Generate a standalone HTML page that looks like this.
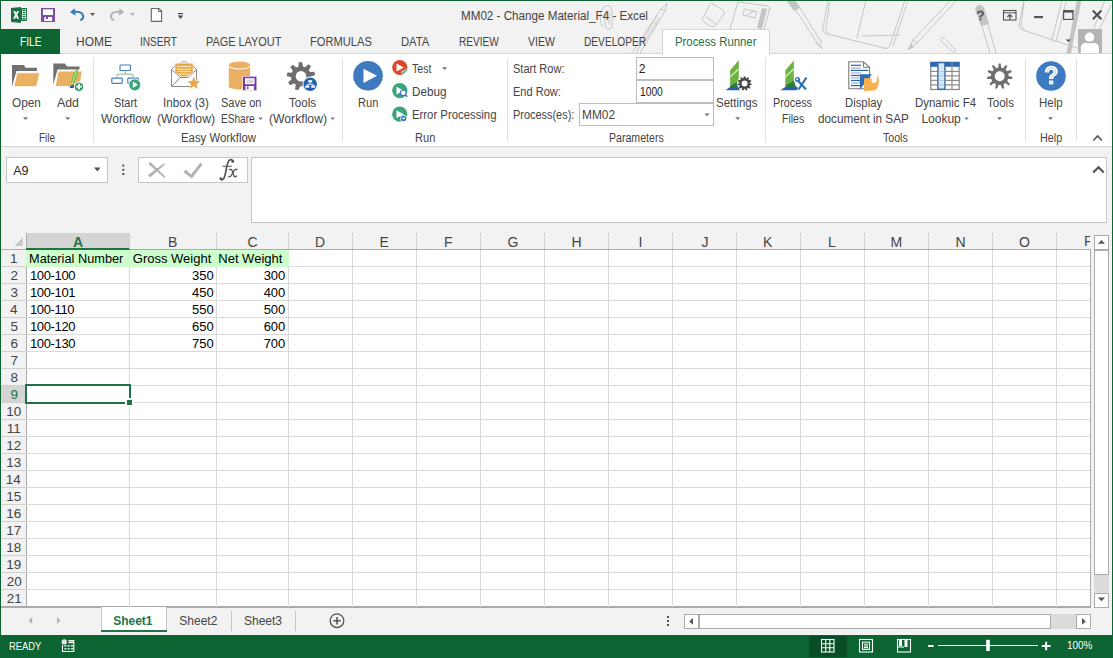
<!DOCTYPE html>
<html><head><meta charset="utf-8">
<style>
*{box-sizing:border-box;margin:0;padding:0}
html,body{width:1113px;height:658px;overflow:hidden;background:#f2f2f2;font-family:"Liberation Sans",sans-serif;color:#444;position:relative}
.a{position:absolute}
.t{position:absolute;white-space:nowrap;line-height:1}
.hl{position:absolute;left:26px;width:1064px;height:1px;background:#dadada}
.vl{position:absolute;top:250px;height:357px;width:1px;background:#dadada}
.cs{position:absolute;top:233px;height:16px;width:1px;background:#d0d0d0}
svg{position:absolute;left:0;top:0}
</style></head><body>
<!-- title + tabs background -->
<div class="a" style="left:0;top:0;width:1113px;height:54px;background:#f2f2f2"></div>
<div class="a" style="left:1px;top:1px;width:1111px;height:1px;background:#fafafa"></div>
<div class="a" style="left:1px;top:1px;width:1px;height:28px;background:#fafafa"></div>
<!-- ribbon -->
<div class="a" style="left:0;top:54px;width:1113px;height:92px;background:#fff"></div>
<div class="a" style="left:0;top:53px;width:1113px;height:1px;background:#d5d5d5"></div>
<div class="a" style="left:0;top:146px;width:1113px;height:1px;background:#d4d4d4"></div>
<div class="a" style="left:0;top:29px;width:60px;height:25px;background:#0b6431"></div>
<div class="a" style="left:662px;top:29px;width:108px;height:26px;background:#fff;border:1px solid #d5d5d5;border-bottom:none"></div>
<!-- ribbon separators -->
<div class="a" style="left:93px;top:58px;width:1px;height:84px;background:#e1e1e1"></div>
<div class="a" style="left:342px;top:58px;width:1px;height:84px;background:#e1e1e1"></div>
<div class="a" style="left:507px;top:58px;width:1px;height:84px;background:#e1e1e1"></div>
<div class="a" style="left:765px;top:58px;width:1px;height:84px;background:#e1e1e1"></div>
<div class="a" style="left:1025px;top:58px;width:1px;height:84px;background:#e1e1e1"></div>
<div class="a" style="left:1076px;top:58px;width:1px;height:84px;background:#e1e1e1"></div>
<!-- parameter inputs -->
<div class="a" style="left:636px;top:57px;width:78px;height:23px;background:#fff;border:1px solid #bdbdbd"></div>
<div class="a" style="left:636px;top:80px;width:78px;height:23px;background:#fff;border:1px solid #bdbdbd"></div>
<div class="a" style="left:579px;top:103px;width:135px;height:23px;background:#fff;border:1px solid #bdbdbd"></div>

<!-- formula area -->
<div class="a" style="left:6px;top:157px;width:102px;height:26px;background:#fff;border:1px solid #c6c6c6"></div>
<div class="a" style="left:138px;top:157px;width:110px;height:26px;background:#fff;border:1px solid #c6c6c6"></div>
<div class="a" style="left:251px;top:157px;width:856px;height:66px;background:#fff;border:1px solid #c6c6c6"></div>

<!-- grid -->
<div class="a" style="left:26px;top:250px;width:1064px;height:357px;background:#fff"></div>
<div class="a" style="left:26px;top:233px;width:104px;height:16px;background:#d4d4d4"></div>
<div class="a" style="left:1px;top:386px;width:25px;height:16px;background:#d4d4d4"></div>
<div class="a" style="left:1px;top:249px;width:1089px;height:1px;background:#ababab"></div>
<div class="a" style="left:26px;top:233px;width:1px;height:374px;background:#ababab"></div>
<div class="a" style="left:26px;top:248px;width:104px;height:2px;background:#217346"></div>
<div class="a" style="left:1090px;top:249px;width:1px;height:358px;background:#ababab"></div>
<div class="a" style="left:1px;top:606px;width:1090px;height:2px;background:#ababab"></div>
<div id="grid"></div>
<div class="vl" style="left:129px"></div><div class="cs" style="left:129px"></div>
<div class="vl" style="left:216px"></div><div class="cs" style="left:216px"></div>
<div class="vl" style="left:288px"></div><div class="cs" style="left:288px"></div>
<div class="vl" style="left:352px"></div><div class="cs" style="left:352px"></div>
<div class="vl" style="left:416px"></div><div class="cs" style="left:416px"></div>
<div class="vl" style="left:480px"></div><div class="cs" style="left:480px"></div>
<div class="vl" style="left:544px"></div><div class="cs" style="left:544px"></div>
<div class="vl" style="left:608px"></div><div class="cs" style="left:608px"></div>
<div class="vl" style="left:672px"></div><div class="cs" style="left:672px"></div>
<div class="vl" style="left:736px"></div><div class="cs" style="left:736px"></div>
<div class="vl" style="left:800px"></div><div class="cs" style="left:800px"></div>
<div class="vl" style="left:864px"></div><div class="cs" style="left:864px"></div>
<div class="vl" style="left:928px"></div><div class="cs" style="left:928px"></div>
<div class="vl" style="left:992px"></div><div class="cs" style="left:992px"></div>
<div class="vl" style="left:1056px"></div><div class="cs" style="left:1056px"></div>
<div class="hl" style="top:266px"></div><div class="a" style="left:1px;top:266px;width:25px;height:1px;background:#d0d0d0"></div>
<div class="hl" style="top:283px"></div><div class="a" style="left:1px;top:283px;width:25px;height:1px;background:#d0d0d0"></div>
<div class="hl" style="top:300px"></div><div class="a" style="left:1px;top:300px;width:25px;height:1px;background:#d0d0d0"></div>
<div class="hl" style="top:317px"></div><div class="a" style="left:1px;top:317px;width:25px;height:1px;background:#d0d0d0"></div>
<div class="hl" style="top:334px"></div><div class="a" style="left:1px;top:334px;width:25px;height:1px;background:#d0d0d0"></div>
<div class="hl" style="top:351px"></div><div class="a" style="left:1px;top:351px;width:25px;height:1px;background:#d0d0d0"></div>
<div class="hl" style="top:368px"></div><div class="a" style="left:1px;top:368px;width:25px;height:1px;background:#d0d0d0"></div>
<div class="hl" style="top:385px"></div><div class="a" style="left:1px;top:385px;width:25px;height:1px;background:#d0d0d0"></div>
<div class="hl" style="top:402px"></div><div class="a" style="left:1px;top:402px;width:25px;height:1px;background:#d0d0d0"></div>
<div class="hl" style="top:419px"></div><div class="a" style="left:1px;top:419px;width:25px;height:1px;background:#d0d0d0"></div>
<div class="hl" style="top:436px"></div><div class="a" style="left:1px;top:436px;width:25px;height:1px;background:#d0d0d0"></div>
<div class="hl" style="top:453px"></div><div class="a" style="left:1px;top:453px;width:25px;height:1px;background:#d0d0d0"></div>
<div class="hl" style="top:470px"></div><div class="a" style="left:1px;top:470px;width:25px;height:1px;background:#d0d0d0"></div>
<div class="hl" style="top:487px"></div><div class="a" style="left:1px;top:487px;width:25px;height:1px;background:#d0d0d0"></div>
<div class="hl" style="top:504px"></div><div class="a" style="left:1px;top:504px;width:25px;height:1px;background:#d0d0d0"></div>
<div class="hl" style="top:521px"></div><div class="a" style="left:1px;top:521px;width:25px;height:1px;background:#d0d0d0"></div>
<div class="hl" style="top:538px"></div><div class="a" style="left:1px;top:538px;width:25px;height:1px;background:#d0d0d0"></div>
<div class="hl" style="top:555px"></div><div class="a" style="left:1px;top:555px;width:25px;height:1px;background:#d0d0d0"></div>
<div class="hl" style="top:572px"></div><div class="a" style="left:1px;top:572px;width:25px;height:1px;background:#d0d0d0"></div>
<div class="hl" style="top:589px"></div><div class="a" style="left:1px;top:589px;width:25px;height:1px;background:#d0d0d0"></div>
<div class="a" style="left:26px;top:250px;width:263px;height:17px;background:#ccffcc"></div>
<!-- selection -->
<div class="a" style="left:25px;top:384px;width:106px;height:20px;border:2px solid #217346"></div>
<div class="a" style="left:125px;top:398px;width:9px;height:8px;background:#fff"></div><div class="a" style="left:127px;top:400px;width:5px;height:5px;background:#217346"></div><div class="a" style="left:129px;top:406px;width:1px;height:1px;background:#dadada"></div>

<!-- scrollbars -->
<div class="a" style="left:1094px;top:235px;width:15px;height:15px;background:#fff;border:1px solid #ababab"></div>
<div class="a" style="left:1094px;top:250px;width:15px;height:343px;background:#dcdcdc"></div>
<div class="a" style="left:1094px;top:250px;width:15px;height:325px;background:#fff;border:1px solid #ababab"></div>
<div class="a" style="left:1094px;top:593px;width:15px;height:15px;background:#fff;border:1px solid #ababab"></div>

<div class="a" style="left:684px;top:614px;width:15px;height:15px;background:#fff;border:1px solid #ababab"></div>
<div class="a" style="left:699px;top:614px;width:377px;height:15px;background:#dcdcdc"></div>
<div class="a" style="left:699px;top:614px;width:352px;height:15px;background:#fff;border:1px solid #ababab"></div>
<div class="a" style="left:1076px;top:614px;width:15px;height:15px;background:#fff;border:1px solid #ababab"></div>

<!-- sheet tabs -->
<div class="a" style="left:101px;top:607px;width:66px;height:25px;background:#fff;border:1px solid #c6c6c6;border-top:none;border-bottom:none"></div>
<div class="a" style="left:101px;top:630px;width:66px;height:2px;background:#217346"></div>
<div class="a" style="left:231px;top:611px;width:1px;height:20px;background:#c6c6c6"></div>
<div class="a" style="left:295px;top:611px;width:1px;height:20px;background:#c6c6c6"></div>

<!-- status bar -->
<div class="a" style="left:0;top:635px;width:1113px;height:23px;background:#0b6431"></div>
<div class="a" style="left:809px;top:636px;width:38px;height:21px;background:#094d26"></div>

<svg width="1113" height="658" viewBox="0 0 1113 658">
<!-- title decorations -->
<g fill="none" stroke="#c6c6c6" stroke-width="1" stroke-linecap="round" stroke-linejoin="round">
<path d="M602 26 C599 19 600 11 604 7 C607 4 612 6 612 11 L612 26 C612 30 606 30 605 26 L605 12 M609 12 L609 24"/>
<path d="M667 3 L661 9 L632 53 M667 3 L665 11 L640 53 M661 9 L665 11 M657 15 L636 53 M659 18 L644 43"/>
<path d="M713 4 L723 10 C725 12 724 14 722 17 L716 25 C714 27 712 27 710 26 L704 22 C702 20 702 18 704 16 L709 6 C710 4 711 3 713 4 Z M706 17 L716 24"/>
<path d="M738 2 L730 29 M770 8 L764 29 M738 2 L768 6 C770 7 771 8 770 10"/>
<path d="M745 9 L757 12 L755 18 L743 15 Z M747 15 L754 11"/>
<path d="M789 0 L820 47 L822 49 L820 43 M795 0 L822 43 M820 47 L815 42"/>
<path d="M828 0 L823 28 C822 31 824 33 827 34 L884 48 C887 49 889 48 890 45 L905 0 M866 0 L857 38 M862 36 L900 35 M830 0 L826 28 C825 30 826 32 829 33 M908 0 L893 46"/>
<path d="M951 0 L913 40 L908 50 L917 43 L957 0 M913 40 L917 43"/>
<path d="M945 38 C942 36 940 39 942 42 L952 51 C954 53 957 52 955 49 L947 41"/>
<path d="M977 10 L990 53 M984 10 L996 53"/>
<path d="M1024 0 L1019 24 C1018.5 27 1020 29 1023 30 L1077 48 M1024 3 L1021 25 C1021 27 1022 28 1024 29 M1066.5 0 L1056 42 M1062 0 L1051.5 42 M1111 5 L1099 30 M1105 0 L1094 28"/>
</g>
<g fill="#c4c4c4" stroke="none">
<path d="M762 8 L767 9 L762 29 L757 28 Z"/>
<path d="M786 0 L795 0 L800 8 L794 11 Z"/>
<path d="M908 50 L911 44 L914 47 Z"/>
<path d="M975 9 C976 4 982 4 984 8 L989 24 L981 26 Z"/>
<path d="M1077 0 L1081.5 0 L1071 53 L1066.5 53 Z"/>
</g>
<!-- QAT -->
<g id="xl">
<path d="M11 8 L21 7 L21 23 L11 22 Z" fill="#1e7145"/>
<rect x="21" y="8" width="6" height="13" rx="1" fill="#1e7145"/>
<rect x="22" y="9.5" width="4" height="10" fill="#fff"/>
<g fill="#1e7145"><rect x="22.6" y="10" width="2.8" height="1.2"/><rect x="22.6" y="12" width="2.8" height="1.2"/><rect x="22.6" y="14" width="2.8" height="1.2"/><rect x="22.6" y="16" width="2.8" height="1.2"/><rect x="22.6" y="18" width="2.8" height="1.2"/></g>
<path d="M13.2 11 L15.2 11 L16.1 13.2 L17 11 L19 11 L17.2 14.8 L19.1 18.8 L17 18.8 L16.1 16.5 L15.2 18.8 L13.1 18.8 L15 14.8 Z" fill="#fff"/>
</g>
<g id="save">
<rect x="41" y="8" width="14" height="14" fill="#7e4ea7"/>
<rect x="43" y="9.3" width="10" height="5.7" fill="#fff"/>
<rect x="44.3" y="17" width="7.8" height="4" fill="#fff"/>
<rect x="46" y="17" width="2" height="2" fill="#7e4ea7"/>
</g>
<path d="M70 12.2 L74.5 8.3 L75 10.8 C81 10.2 85 13.5 84.2 17.5 C83.8 19.3 82.5 20.4 80.5 21 L79.8 19.4 C81.6 18.6 82.3 17.5 82.2 16.2 C82 13.8 79 12.4 75.2 13 L75.8 15.8 Z" fill="#3b78c0"/>
<path d="M90 13 L95 13 L92.5 16 Z" fill="#555"/>
<path d="M124.2 12.2 L119.7 8.3 L119.2 10.8 C113.2 10.2 109.2 13.5 110 17.5 C110.4 19.3 111.7 20.4 113.7 21 L114.4 19.4 C112.6 18.6 111.9 17.5 112 16.2 C112.2 13.8 115.2 12.4 119 13 L118.4 15.8 Z" fill="#b4b4b4"/>
<path d="M130 13 L135 13 L132.5 16 Z" fill="#b4b4b4"/>
<path d="M151.3 8.5 L159 8.5 L161.6 11.2 L161.6 21.4 L151.3 21.4 Z" fill="#fff" stroke="#666" stroke-width="1.1"/>
<path d="M158.6 8.6 L158.6 11.5 L161.5 11.5" fill="none" stroke="#666" stroke-width="1"/>
<rect x="178" y="13" width="5" height="1.2" fill="#444"/>
<path d="M177.8 15.5 L183.2 15.5 L180.5 19 Z" fill="#444"/>
<!-- window controls -->
<path d="M976.8 13.6 C976.8 11.5 978.4 10.6 980.3 10.6 C982.5 10.6 984.1 11.8 984.1 13.6 C984.1 15.1 983.1 15.8 982 16.4 C981.5 16.7 981.4 17 981.4 17.6 L979.3 17.6 C979.3 16.5 979.6 15.8 980.6 15.2 C981.5 14.6 981.9 14.3 981.9 13.6 C981.9 12.9 981.3 12.5 980.4 12.5 C979.4 12.5 978.9 13 978.9 13.9 Z" fill="#5e5e5e"/><rect x="979.3" y="18.3" width="2.1" height="2" fill="#5e5e5e"/>
<rect x="1003.5" y="10.5" width="12.5" height="9.5" fill="none" stroke="#555" stroke-width="1.1"/>
<line x1="1004" y1="12.8" x2="1016" y2="12.8" stroke="#555" stroke-width="1"/>
<path d="M1007.3 17 L1009.8 14.5 L1012.3 17 M1009.8 14.5 L1009.8 19.8" fill="none" stroke="#555" stroke-width="1.2"/>
<rect x="1034" y="16" width="9" height="2.2" fill="#555"/>
<rect x="1063.6" y="10.6" width="9.3" height="8.8" fill="none" stroke="#555" stroke-width="1.2"/>
<rect x="1063" y="10" width="10.4" height="2.6" fill="#555"/>
<path d="M1092.8 10.6 L1101.4 19.2 M1101.4 10.6 L1092.8 19.2" stroke="#505050" stroke-width="2.1"/>
<path d="M1065.6 39.4 L1071.1 39.4 L1068.35 42 Z" fill="#555"/>
<rect x="1078" y="29" width="24" height="24" fill="#b4b4b4"/>
<circle cx="1089.6" cy="37.2" r="4.7" fill="#fff"/>
<path d="M1080.8 53 L1080.8 47.5 C1080.8 44.5 1083.5 42.8 1086.5 42.8 L1092.8 42.8 C1096 42.8 1098.9 44.5 1098.9 47.5 L1098.9 53 Z" fill="#fff"/>
<rect x="1086.6" y="41.6" width="6" height="1.6" fill="#b4b4b4"/>
<path d="M12 65 L24 65 L25.5 67.8 L37 67.8 L37 71 L16.5 71 L12 86.5 Z" fill="#707070"/>
<path d="M17 72.8 L39.8 72.8 L36.7 86.8 L13.7 86.8 Z" fill="#e9b161" stroke="#fff" stroke-width="0.9"/>
<path d="M53.3 63.5 L64.8 63.5 L67 66.5 L79.5 66.5 L79.5 69.5 L57.5 69.5 L53.3 85 Z" fill="#707070"/>
<path d="M58.2 71 L82.3 71 L79.8 86.5 L55.2 86.5 Z" fill="#e9b161" stroke="#fff" stroke-width="0.9"/>
<path d="M77.6 68.2 C79 72.5 76.5 80.5 72.3 85.5 C70.2 81 72.5 72.5 77.6 68.2 Z" fill="#7cc04a"/><path d="M76.4 71 C75 75 73.5 79 72.4 84" fill="none" stroke="#d8efc4" stroke-width="0.7"/>
<path d="M70.5 85.8 L74.5 84.8 L74 87.8 L69.5 88 Z" fill="#2a4f9e"/>
<circle cx="79" cy="86.7" r="5.2" fill="#fff"/><circle cx="79" cy="86.7" r="4.3" fill="#2e9f6a"/>
<path d="M78.1 83.8 h1.8 v2 h2 v1.8 h-2 v2 h-1.8 v-2 h-2 v-1.8 h2 Z" fill="#fff"/>
<g fill="none" stroke="#4a7fc4" stroke-width="1.2"><rect x="120" y="65" width="10.5" height="5.5" rx="0.8"/><rect x="111.8" y="78.2" width="10.5" height="5.2" rx="0.8"/><rect x="127.8" y="78.2" width="10.5" height="5.2" rx="0.8"/></g>
<path d="M125.2 70.5 V74.2 M117 78.2 V74.2 H133 V78.2" fill="none" stroke="#8fb8a0" stroke-width="1"/>
<circle cx="134.8" cy="84.8" r="6.2" fill="#fff"/><circle cx="134.8" cy="84.8" r="5.6" fill="#3aa57a"/>
<path d="M132.8 81.6 L137.9 84.8 L132.8 88 Z" fill="#fff"/>
<path d="M184 61.5 C181.5 61.5 181 63 180 63.5 M184 61.5 C186.5 61.5 187 63 188 63.5" fill="none" stroke="#999" stroke-width="0.9"/>
<path d="M171.5 69.5 L176 65.2 L192 65.2 L196.5 69.5 V86.5 H171.5 Z" fill="#fff"/><path d="M171.5 69.5 V86.5 H196.5 V69.5 M171.5 69.5 L175.5 65.8 M196.5 69.5 L192.5 65.8" fill="none" stroke="#8c8c8c" stroke-width="1"/>
<path d="M175.3 63.5 L192.8 63.5 L192.8 72 L186.5 76.5 L181.5 76.5 L175.3 72 Z" fill="#eaa84a"/>
<g stroke="#fce9c4" stroke-width="1"><line x1="177" y1="66.5" x2="191" y2="66.5"/><line x1="177" y1="69.3" x2="191" y2="69.3"/><line x1="177" y1="71.5" x2="191" y2="71.5"/><line x1="179" y1="74" x2="189" y2="74"/></g>
<path d="M171.5 69.5 L180.5 77.5 L188 77.5 L196.5 69.5 M172 86 L180.5 77.5" fill="none" stroke="#8c8c8c" stroke-width="1"/>
<path d="M193.80 75.50 L195.92 80.49 L201.31 80.96 L197.22 84.51 L198.44 89.79 L193.80 87.00 L189.16 89.79 L190.38 84.51 L186.29 80.96 L191.68 80.49 Z" fill="#fff"/>
<path d="M193.80 76.50 L195.50 81.05 L200.36 81.27 L196.56 84.30 L197.86 88.98 L193.80 86.30 L189.74 88.98 L191.04 84.30 L187.24 81.27 L192.10 81.05 Z" fill="#e9a94a"/>
<path d="M228.8 65 L250.2 65 L250.2 86.5 A10.7 3 0 0 1 228.8 86.5 Z" fill="#e9b161"/>
<ellipse cx="239.5" cy="65" rx="10.7" ry="3.6" fill="#e9b161"/>
<path d="M228.8 65.8 A10.7 3.2 0 0 0 250.2 65.8" fill="none" stroke="#fff" stroke-width="1"/>
<rect x="242.5" y="76" width="14.5" height="15" fill="#fff"/>
<rect x="243" y="76.6" width="13.5" height="13.7" fill="#7a3cac"/>
<rect x="245" y="78.2" width="9.5" height="6" fill="#fff"/><rect x="246.3" y="79.3" width="7" height="4" fill="#d8d8d8"/>
<rect x="245.5" y="86" width="8.5" height="4.3" fill="#fff"/><rect x="247" y="86.5" width="1.5" height="2.5" fill="#7a3cac"/>
<path d="M298.33 66.66 L298.78 62.27 L302.24 62.15 L302.99 66.50 L305.15 67.20 L308.31 64.13 L311.04 66.26 L308.83 70.07 L310.03 71.99 L314.43 71.68 L315.15 75.06 L311.00 76.56 L310.68 78.80 L314.26 81.39 L312.63 84.44 L308.49 82.93 L306.81 84.44 L307.88 88.72 L304.68 90.02 L302.48 86.19 L300.22 86.27 L298.29 90.24 L295.00 89.17 L295.78 84.83 L293.99 83.43 L289.96 85.24 L288.13 82.30 L291.52 79.47 L291.05 77.26 L286.80 76.05 L287.28 72.62 L291.70 72.63 L292.76 70.64 L290.28 66.98 L292.86 64.67 L296.23 67.51 Z M295.70 76.30 a5.3 5.3 0 1 0 10.6 0 a5.3 5.3 0 1 0 -10.6 0 Z" fill="#6e6e6e" fill-rule="evenodd"/>
<circle cx="310.2" cy="84.3" r="7.7" fill="#fff"/><circle cx="310.2" cy="84.3" r="6.7" fill="#1e5fb0"/>
<g fill="#fff"><rect x="308.2" y="80.2" width="4" height="2.2"/><rect x="305.3" y="85.5" width="4" height="2.2"/><rect x="311.2" y="85.5" width="4" height="2.2"/></g>
<path d="M310.2 82.4 V84.3 M307.3 85.5 V84.3 H313.2 V85.5" fill="none" stroke="#fff" stroke-width="0.8"/>
<circle cx="368" cy="75.8" r="14.8" fill="#3d7abf"/>
<path d="M363.5 68.8 L377 75.8 L363.5 82.9 Z" fill="#fff"/>
<circle cx="399.8" cy="67.5" r="7.6" fill="#d9472b"/><path d="M396.5 63.6 L403.8 67.5 L396.5 71.4 Z" fill="#fff"/>
<path d="M401.5 71.2 L403.3 73 L407 69.3" fill="none" stroke="#fff" stroke-width="2.6"/><path d="M401.5 71.2 L403.3 73 L407 69.3" fill="none" stroke="#3aa57a" stroke-width="1.3"/>
<circle cx="399.8" cy="90.6" r="7.6" fill="#3aa57a"/><path d="M396.5 86.7 L403.8 90.6 L396.5 94.5 Z" fill="#fff"/>
<circle cx="403.3" cy="92.8" r="2.8" fill="#fff" stroke="#3d6fc0" stroke-width="1.1"/><path d="M405.2 94.8 L407.2 96.8" stroke="#3d6fc0" stroke-width="1.4"/>
<circle cx="399.8" cy="114.2" r="7.6" fill="#3aa57a"/><path d="M396.5 110.3 L403.8 114.2 L396.5 118.1 Z" fill="#fff"/>
<circle cx="403.6" cy="118.4" r="3.4" fill="#fff"/><circle cx="403.6" cy="118.4" r="2.7" fill="#3d6fc0"/><rect x="402.3" y="117.7" width="2.6" height="1.4" fill="#fff"/>
<path d="M442 67.3 L447.3 67.3 L444.65 70 Z" fill="#777"/>
<path d="M704.5 113.5 L709.5 113.5 L707 116.3 Z" fill="#777"/>
<path d="M730.1 70.2 L738.8 60.3 L738.8 80.5 L730.1 85.5 Z" fill="#6cb33e"/>
<path d="M730.1 76 L738.8 68 L738.8 69.8 L730.1 77.8 Z" fill="#dfeccc"/>
<path d="M730.1 85.5 L738.8 80.5 L739.4 87 L730.1 87.2 Z" fill="#2f7d3a"/>
<path d="M725.5 90.2 L730 87 L739.6 86.8 L739.6 90.2 Z" fill="#2b5fad"/>
<circle cx="744.6" cy="83.5" r="7.6" fill="#fff"/>
<path d="M743.50 78.32 L743.75 76.55 L745.45 76.55 L745.70 78.32 L746.48 78.54 L747.64 77.19 L749.07 78.12 L748.33 79.73 L748.86 80.34 L750.57 79.84 L751.27 81.39 L749.77 82.35 L749.89 83.15 L751.60 83.64 L751.36 85.33 L749.57 85.33 L749.24 86.06 L750.41 87.41 L749.29 88.69 L747.80 87.73 L747.12 88.16 L747.38 89.93 L745.74 90.41 L745.00 88.78 L744.20 88.78 L743.46 90.41 L741.82 89.93 L742.08 88.16 L741.40 87.73 L739.91 88.69 L738.79 87.41 L739.96 86.06 L739.63 85.33 L737.84 85.33 L737.60 83.64 L739.31 83.15 L739.43 82.35 L737.93 81.39 L738.63 79.84 L740.34 80.34 L740.87 79.73 L740.13 78.12 L741.56 77.19 L742.72 78.54 Z M741.60 83.50 a3.0 3.0 0 1 0 6.0 0 a3.0 3.0 0 1 0 -6.0 0 Z" fill="#444" fill-rule="evenodd"/>
<path d="M785.4 70.2 L793.8 60.4 L793.8 80.3 L785.4 85.3 Z" fill="#6cb33e"/>
<path d="M785.4 76 L793.8 68 L793.8 69.8 L785.4 77.8 Z" fill="#dfeccc"/>
<path d="M785.4 85.3 L793.8 80.3 L796 87 L785.4 87.2 Z" fill="#2f7d3a"/>
<path d="M780.5 90.2 L785.3 87 L797.5 86.8 L797.5 90.2 Z" fill="#2b5fad"/>
<path d="M797 79.5 L806 89.5" stroke="#2f6fba" stroke-width="2.2"/><circle cx="797.5" cy="79.5" r="2.5" fill="#2f6fba"/><circle cx="797.2" cy="79.2" r="1" fill="#fff"/>
<path d="M806.5 77.5 L798.5 89.5" stroke="#2f6fba" stroke-width="2.2"/>
<path d="M848.8 61.8 L863.5 61.8 L869.6 67.5 L869.6 88.8 L848.8 88.8 Z" fill="#fff" stroke="#7a7a7a" stroke-width="1.1"/>
<path d="M863.5 62 L863.5 67.3 L869.4 67.3" fill="none" stroke="#7a7a7a" stroke-width="1"/>
<rect x="851" y="64.7" width="10" height="1.2" fill="#2e64ad"/>
<rect x="851" y="67.4" width="10" height="1.2" fill="#93b3d9"/>
<rect x="851" y="69.80000000000001" width="17" height="1.2" fill="#2e64ad"/>
<rect x="851" y="72.4" width="10" height="1.2" fill="#93b3d9"/>
<rect x="851" y="74.9" width="10" height="1.2" fill="#2e64ad"/>
<rect x="851" y="77.4" width="10" height="1.2" fill="#93b3d9"/>
<rect x="851" y="79.9" width="10" height="1.2" fill="#2e64ad"/>
<rect x="851" y="82.4" width="10" height="1.2" fill="#93b3d9"/>
<rect x="851" y="85.0" width="10" height="1.2" fill="#2e64ad"/>
<path d="M860 74.2 L871.9 74.2 L860 89.6 Z" fill="#2e6db5"/>
<path d="M864 78.3 L872 78.3 C870.5 80.5 872 83.5 874.5 83 C877 82.5 877.5 78.5 877.2 75 C879.5 78 879.5 86 876.5 89 C873.5 91.5 868 90 864 91.5 Z" fill="#f7b04e"/>
<rect x="930.8" y="62.3" width="28.4" height="27.2" fill="#fff" stroke="#8c8c8c" stroke-width="1.3"/>
<rect x="930.3" y="62" width="29.3" height="4.8" fill="#2e6ab3"/>
<g stroke="#8c8c8c" stroke-width="1.2"><line x1="930.5" y1="71.4" x2="959.5" y2="71.4"/><line x1="930.5" y1="75.9" x2="959.5" y2="75.9"/><line x1="930.5" y1="80.4" x2="959.5" y2="80.4"/><line x1="930.5" y1="84.9" x2="959.5" y2="84.9"/><line x1="952" y1="62" x2="952" y2="89.5"/></g>
<rect x="937.9" y="62.6" width="7" height="26.6" fill="#cfe8fb" stroke="#3f6a9c" stroke-width="1.4"/>
<g stroke="#a9c4dd" stroke-width="0.8"><line x1="938.5" y1="71.4" x2="944.5" y2="71.4"/><line x1="938.5" y1="75.9" x2="944.5" y2="75.9"/><line x1="938.5" y1="80.4" x2="944.5" y2="80.4"/><line x1="938.5" y1="84.9" x2="944.5" y2="84.9"/></g>
<path d="M998.25 67.62 L998.70 63.54 L1000.70 63.54 L1001.15 67.62 L1003.17 68.21 L1005.75 65.02 L1007.44 66.11 L1005.61 69.78 L1006.99 71.37 L1010.89 70.09 L1011.72 71.91 L1008.20 74.02 L1008.50 76.10 L1012.47 77.12 L1012.19 79.11 L1008.08 78.97 L1007.21 80.89 L1010.00 83.90 L1008.69 85.42 L1005.31 83.08 L1003.54 84.22 L1004.26 88.26 L1002.33 88.83 L1000.75 85.04 L998.65 85.04 L997.07 88.83 L995.14 88.26 L995.86 84.22 L994.09 83.08 L990.71 85.42 L989.40 83.90 L992.19 80.89 L991.32 78.97 L987.21 79.11 L986.93 77.12 L990.90 76.10 L991.20 74.02 L987.68 71.91 L988.51 70.09 L992.41 71.37 L993.79 69.78 L991.96 66.11 L993.65 65.02 L996.23 68.21 Z M994.70 76.30 a5.0 5.0 0 1 0 10.0 0 a5.0 5.0 0 1 0 -10.0 0 Z" fill="#6e6e6e" fill-rule="evenodd"/>
<path d="M997 117.2 L1002 117.2 L999.5 120 Z" fill="#777"/>
<circle cx="1051" cy="76" r="14.8" fill="#3d7abf"/>
<path d="M1044.8 72.6 C1044.8 68.2 1047.6 65.8 1051.3 65.8 C1055.2 65.8 1057.8 68.2 1057.8 71.5 C1057.8 74.5 1055.7 75.6 1054.3 76.5 C1053.5 77 1053.3 77.6 1053.3 79 L1049 79 C1049 76.8 1049.5 75.3 1051.4 74.1 C1052.8 73.2 1053.3 72.8 1053.3 71.7 C1053.3 70.5 1052.5 69.8 1051.2 69.8 C1049.8 69.8 1049 70.7 1049 72.6 Z" fill="#fff"/>
<rect x="1049" y="80.5" width="4.3" height="3.9" fill="#fff"/>
<path d="M1047 72.4 C1047 69.5 1048.8 67.8 1051.3 67.8 C1054 67.8 1055.7 69.4 1055.7 71.6 C1055.7 73.6 1054.3 74.5 1053.1 75.3 C1051.8 76.2 1051.2 76.9 1051.2 78.2 M1050.1 82.4 H1052.2" fill="none" stroke="#3d7abf" stroke-width="0.45" stroke-opacity="0.8"/>
<path d="M1048 117.2 L1053 117.2 L1050.5 120 Z" fill="#777"/>
<path d="M1093.3 140.5 L1097.6 136 L1101.9 140.5" fill="none" stroke="#555" stroke-width="1.6"/>
<path d="M23.0 117.2 L28.0 117.2 L25.5 120 Z" fill="#777"/>
<path d="M65.2 117.2 L70.2 117.2 L67.7 120 Z" fill="#777"/>
<path d="M735.2 117.2 L740.2 117.2 L737.7 120 Z" fill="#777"/>
<path d="M258.2 117.6 L262.8 117.6 L260.5 120 Z" fill="#777"/>
<path d="M330.3 117.6 L334.90000000000003 117.6 L332.6 120 Z" fill="#777"/>
<path d="M964.3000000000001 117.6 L968.9 117.6 L966.6 120 Z" fill="#777"/>
<path d="M94 167.5 L100.7 167.5 L97.35 171.5 Z" fill="#555"/>
<g fill="#555"><rect x="122.3" y="164.6" width="2" height="2"/><rect x="122.3" y="168.8" width="2" height="2"/><rect x="122.3" y="173" width="2" height="2"/></g>
<path d="M148.4 164 L150.6 161.9 L165.3 176.8 L164.3 177.9 Z" fill="#b3b3b3"/><path d="M164.1 163.2 L165.1 164.3 L150.2 177.4 L147.9 175.1 Z" fill="#b3b3b3"/>
<path d="M183.4 172.3 L185.9 169.8 L191 174.6 L200.5 162.6 L202.6 164.5 L191.9 178.6 Z" fill="#b3b3b3"/>
<g fill="none" stroke="#555" stroke-linecap="round"><path d="M233.4 161.4 C232.8 159.6 230.6 159.1 229.2 160.4 C227.6 161.9 227 165 226.3 169 C225.5 173.5 225 176.8 223.6 178.8 C222.6 180.3 221 180.3 220.4 179" stroke-width="1.7"/><path d="M222.9 166.3 H231.4" stroke-width="1.1"/><path d="M229.3 169.8 C230.6 168.8 231.8 169.4 232.3 171 L233.7 175.4 C234.2 177 235.4 177.2 236.4 176" stroke-width="1.3"/><path d="M237 169.6 C236 168.9 235 169.3 234.2 170.6 L231.6 175 C230.8 176.5 229.6 177.1 228.8 176.4" stroke-width="1.3"/></g><circle cx="232.6" cy="161.4" r="1.3" fill="#555"/><circle cx="220.9" cy="178.6" r="1.3" fill="#555"/>
<path d="M1093.2 172.6 L1098.5 167.2 L1103.8 172.6" fill="none" stroke="#555" stroke-width="2.2"/>
<path d="M14.5 246 L22.8 237.5 L22.8 246 Z" fill="#c6c6c6"/>
<path d="M1097.9 243.8 L1105 243.8 L1101.45 240 Z" fill="#555"/>
<path d="M1097.9 597.5 L1105 597.5 L1101.45 601.3 Z" fill="#555"/>
<path d="M693 618 L693 624.8 L689.2 621.4 Z" fill="#555"/>
<path d="M1082 618 L1082 624.8 L1085.8 621.4 Z" fill="#555"/>
<g fill="#555"><rect x="667" y="616" width="2" height="2"/><rect x="667" y="620" width="2" height="2"/><rect x="667" y="624" width="2" height="2"/></g>
<path d="M32.2 617 L32.2 624 L28.6 620.5 Z" fill="#b3b3b3"/>
<path d="M57 617 L57 624 L60.6 620.5 Z" fill="#b3b3b3"/>
<circle cx="337" cy="620.7" r="6.8" fill="none" stroke="#555" stroke-width="1.3"/><path d="M333.3 620.7 H340.7 M337 617 V624.4" stroke="#555" stroke-width="1.6"/>
<path d="M62.5 645 V651.5 H73.8 V640.6 H68.5" fill="none" stroke="#fff" stroke-width="1.1"/>
<rect x="68.5" y="641.6" width="5" height="1.6" fill="#fff"/>
<g fill="#fff"><rect x="64.3" y="645.2" width="2.2" height="1.3"/><rect x="67.6" y="645.2" width="2.2" height="1.3"/><rect x="70.9" y="645.2" width="2.2" height="1.3"/><rect x="64.3" y="648.2" width="2.2" height="1.3"/><rect x="67.6" y="648.2" width="2.2" height="1.3"/><rect x="70.9" y="648.2" width="2.2" height="1.3"/></g>
<circle cx="64.2" cy="641.9" r="2.7" fill="#e4e4e4"/>
<g fill="none" stroke="#fff" stroke-width="1.1"><rect x="821.5" y="639.5" width="12.5" height="12.5"/><path d="M825.7 639.5 V652 M829.8 639.5 V652 M821.5 643.7 H834 M821.5 647.8 H834"/></g>
<g fill="none" stroke="#fff" stroke-width="1.1"><rect x="859.5" y="639.5" width="13" height="12.5"/><rect x="862.5" y="642.2" width="7" height="7.2"/><path d="M864 644.3 H868 M864 646 H868 M864 647.6 H868"/></g>
<g fill="none" stroke="#fff" stroke-width="1.1"><rect x="897.5" y="639.5" width="13" height="12.5"/></g><rect x="899" y="639.5" width="3" height="6.5" fill="#fff"/><rect x="904.5" y="639.5" width="3" height="7.5" fill="#fff"/><path d="M897.5 647 H904" stroke="#fff" stroke-width="1.1"/>
<rect x="928" y="645" width="5.6" height="2" fill="#fff"/>
<rect x="938" y="645" width="100" height="1" fill="#fff"/>
<rect x="986.2" y="639.8" width="3.6" height="11.2" fill="#fff"/>
<path d="M1041.8 646 H1050.5 M1046.15 641.8 V650.2" stroke="#fff" stroke-width="2"/>
</svg>

<div class="t" style="left:461.36px;top:10px;font-size:12.4px;color:#444;transform:scaleX(0.9394);transform-origin:0 0">MM02 - Change Material_F4 - Excel</div>
<div class="t" style="left:19.99px;top:36px;font-size:12.5px;color:#fff;transform:scaleX(0.8140);transform-origin:0 0">FILE</div>
<div class="t" style="left:76.44px;top:36px;font-size:12.5px;color:#444;transform:scaleX(0.9568);transform-origin:0 0">HOME</div>
<div class="t" style="left:140.19px;top:36px;font-size:12.5px;color:#444;transform:scaleX(0.8093);transform-origin:0 0">INSERT</div>
<div class="t" style="left:206.13px;top:36px;font-size:12.5px;color:#444;transform:scaleX(0.8725);transform-origin:0 0">PAGE LAYOUT</div>
<div class="t" style="left:310.11px;top:36px;font-size:12.5px;color:#444;transform:scaleX(0.8911);transform-origin:0 0">FORMULAS</div>
<div class="t" style="left:400.70px;top:36px;font-size:12.5px;color:#444;transform:scaleX(0.8990);transform-origin:0 0">DATA</div>
<div class="t" style="left:458.59px;top:36px;font-size:12.5px;color:#444;transform:scaleX(0.8080);transform-origin:0 0">REVIEW</div>
<div class="t" style="left:527.70px;top:36px;font-size:12.5px;color:#444;transform:scaleX(0.8399);transform-origin:0 0">VIEW</div>
<div class="t" style="left:583.69px;top:36px;font-size:12.5px;color:#444;transform:scaleX(0.8131);transform-origin:0 0">DEVELOPER</div>
<div class="t" style="left:674.69px;top:36px;font-size:12.5px;color:#1e7145;transform:scaleX(0.9089);transform-origin:0 0">Process Runner</div>
<div class="t" style="left:11.50px;top:97px;font-size:12.0px;color:#444;transform:scaleX(0.9797);transform-origin:0 0">Open</div>
<div class="t" style="left:57.00px;top:97px;font-size:12.0px;color:#444;transform:scaleX(1.0301);transform-origin:0 0">Add</div>
<div class="t" style="left:38.80px;top:132px;font-size:12.0px;color:#444;transform:scaleX(0.8341);transform-origin:0 0">File</div>
<div class="t" style="left:113.90px;top:97px;font-size:12.0px;color:#444;transform:scaleX(0.9113);transform-origin:0 0">Start</div>
<div class="t" style="left:100.60px;top:113px;font-size:12.0px;color:#444;transform:scaleX(1.0111);transform-origin:0 0">Workflow</div>
<div class="t" style="left:162.53px;top:97px;font-size:12.0px;color:#444;transform:scaleX(0.9707);transform-origin:0 0">Inbox (3)</div>
<div class="t" style="left:156.50px;top:113px;font-size:12.0px;color:#444;transform:scaleX(1.0155);transform-origin:0 0">(Workflow)</div>
<div class="t" style="left:221.30px;top:97px;font-size:12.0px;color:#444;transform:scaleX(0.9179);transform-origin:0 0">Save on</div>
<div class="t" style="left:220.90px;top:113px;font-size:12.0px;color:#444;transform:scaleX(0.8401);transform-origin:0 0">EShare</div>
<div class="t" style="left:289.00px;top:97px;font-size:12.0px;color:#444;transform:scaleX(0.9638);transform-origin:0 0">Tools</div>
<div class="t" style="left:268.80px;top:113px;font-size:12.0px;color:#444;transform:scaleX(1.0155);transform-origin:0 0">(Workflow)</div>
<div class="t" style="left:180.60px;top:132px;font-size:12.0px;color:#444;transform:scaleX(0.9476);transform-origin:0 0">Easy Workflow</div>
<div class="t" style="left:357.60px;top:97px;font-size:12.0px;color:#444;transform:scaleX(0.9232);transform-origin:0 0">Run</div>
<div class="t" style="left:411.70px;top:63px;font-size:12.0px;color:#444;transform:scaleX(0.8821);transform-origin:0 0">Test</div>
<div class="t" style="left:411.70px;top:86px;font-size:12.0px;color:#444;transform:scaleX(0.9744);transform-origin:0 0">Debug</div>
<div class="t" style="left:411.70px;top:109px;font-size:12.0px;color:#444;transform:scaleX(0.9449);transform-origin:0 0">Error Processing</div>
<div class="t" style="left:414.70px;top:132px;font-size:12.0px;color:#444;transform:scaleX(0.9232);transform-origin:0 0">Run</div>
<div class="t" style="left:512.60px;top:63px;font-size:12.0px;color:#444;transform:scaleX(0.9195);transform-origin:0 0">Start Row:</div>
<div class="t" style="left:512.60px;top:86px;font-size:12.0px;color:#444;transform:scaleX(0.9208);transform-origin:0 0">End Row:</div>
<div class="t" style="left:512.60px;top:109px;font-size:12.0px;color:#444;transform:scaleX(0.9103);transform-origin:0 0">Process(es):</div>
<div class="t" style="left:638.80px;top:63px;font-size:12.0px;color:#222">2</div>
<div class="t" style="left:639.50px;top:86px;font-size:12.0px;color:#222;transform:scaleX(0.8549);transform-origin:0 0">1000</div>
<div class="t" style="left:582.40px;top:109px;font-size:12.0px;color:#444;transform:scaleX(0.9891);transform-origin:0 0">MM02</div>
<div class="t" style="left:608.60px;top:132px;font-size:12.0px;color:#444;transform:scaleX(0.8820);transform-origin:0 0">Parameters</div>
<div class="t" style="left:716.40px;top:97px;font-size:12.0px;color:#444;transform:scaleX(0.9571);transform-origin:0 0">Settings</div>
<div class="t" style="left:772.70px;top:97px;font-size:12.0px;color:#444;transform:scaleX(0.8997);transform-origin:0 0">Process</div>
<div class="t" style="left:781.60px;top:113px;font-size:12.0px;color:#444;transform:scaleX(0.8762);transform-origin:0 0">Files</div>
<div class="t" style="left:845.00px;top:97px;font-size:12.0px;color:#444;transform:scaleX(0.9429);transform-origin:0 0">Display</div>
<div class="t" style="left:817.60px;top:113px;font-size:12.0px;color:#444;transform:scaleX(0.9804);transform-origin:0 0">document in SAP</div>
<div class="t" style="left:882.60px;top:132px;font-size:12.0px;color:#444;transform:scaleX(0.8817);transform-origin:0 0">Tools</div>
<div class="t" style="left:914.70px;top:97px;font-size:12.0px;color:#444;transform:scaleX(0.9528);transform-origin:0 0">Dynamic F4</div>
<div class="t" style="left:921.40px;top:113px;font-size:12.0px;color:#444">Lookup</div>
<div class="t" style="left:986.90px;top:97px;font-size:12.0px;color:#444;transform:scaleX(0.9602);transform-origin:0 0">Tools</div>
<div class="t" style="left:1038.60px;top:97px;font-size:12.0px;color:#444;transform:scaleX(0.9558);transform-origin:0 0">Help</div>
<div class="t" style="left:1039.60px;top:132px;font-size:12.0px;color:#444;transform:scaleX(0.8958);transform-origin:0 0">Help</div>
<div class="t" style="left:13.20px;top:165px;font-size:12.5px;color:#222">A9</div>
<div class="t" style="left:28.52px;top:252px;font-size:13.0px;color:#000;transform:scaleX(0.9817);transform-origin:0 0">Material Number</div>
<div class="t" style="left:132.80px;top:252px;font-size:13.0px;color:#000">Gross Weight</div>
<div class="t" style="left:218.29px;top:252px;font-size:13.0px;color:#000">Net Weight</div>
<div class="t" style="left:113.20px;top:615px;font-size:12.0px;color:#217346;font-weight:bold">Sheet1</div>
<div class="t" style="left:179.30px;top:615px;font-size:12.0px;color:#444">Sheet2</div>
<div class="t" style="left:244.00px;top:615px;font-size:12.0px;color:#444">Sheet3</div>
<div class="t" style="left:8.60px;top:641px;font-size:11.8px;color:#fff;transform:scaleX(0.7946);transform-origin:0 0">READY</div>
<div class="t" style="left:1066.90px;top:640px;font-size:11.8px;color:#fff;transform:scaleX(0.8441);transform-origin:0 0">100%</div>
<div class="t" style="left:29.90px;top:269px;font-size:13.0px;color:#000;letter-spacing:-0.350px">100-100</div>
<div class="t" style="left:191.94px;top:269px;font-size:13.0px;color:#000">350</div>
<div class="t" style="left:263.64px;top:269px;font-size:13.0px;color:#000">300</div>
<div class="t" style="left:29.90px;top:286px;font-size:13.0px;color:#000;letter-spacing:-0.350px">100-101</div>
<div class="t" style="left:191.94px;top:286px;font-size:13.0px;color:#000">450</div>
<div class="t" style="left:263.64px;top:286px;font-size:13.0px;color:#000">400</div>
<div class="t" style="left:29.90px;top:303px;font-size:13.0px;color:#000;letter-spacing:-0.350px">100-110</div>
<div class="t" style="left:191.94px;top:303px;font-size:13.0px;color:#000">550</div>
<div class="t" style="left:263.64px;top:303px;font-size:13.0px;color:#000">500</div>
<div class="t" style="left:29.90px;top:320px;font-size:13.0px;color:#000;letter-spacing:-0.350px">100-120</div>
<div class="t" style="left:191.94px;top:320px;font-size:13.0px;color:#000">650</div>
<div class="t" style="left:263.64px;top:320px;font-size:13.0px;color:#000">600</div>
<div class="t" style="left:29.90px;top:337px;font-size:13.0px;color:#000;letter-spacing:-0.350px">100-130</div>
<div class="t" style="left:191.94px;top:337px;font-size:13.0px;color:#000">750</div>
<div class="t" style="left:263.64px;top:337px;font-size:13.0px;color:#000">700</div>
<div class="t" style="left:73.00px;top:235px;font-size:14.0px;color:#217346;font-weight:bold">A</div>
<div class="t" style="left:168.00px;top:235px;font-size:14.0px;color:#444">B</div>
<div class="t" style="left:247.50px;top:235px;font-size:14.0px;color:#444">C</div>
<div class="t" style="left:315.00px;top:235px;font-size:14.0px;color:#444">D</div>
<div class="t" style="left:379.50px;top:235px;font-size:14.0px;color:#444">E</div>
<div class="t" style="left:444.00px;top:235px;font-size:14.0px;color:#444">F</div>
<div class="t" style="left:507.50px;top:235px;font-size:14.0px;color:#444">G</div>
<div class="t" style="left:571.50px;top:235px;font-size:14.0px;color:#444">H</div>
<div class="t" style="left:638.50px;top:235px;font-size:14.0px;color:#444">I</div>
<div class="t" style="left:701.50px;top:235px;font-size:14.0px;color:#444">J</div>
<div class="t" style="left:763.00px;top:235px;font-size:14.0px;color:#444">K</div>
<div class="t" style="left:828.00px;top:235px;font-size:14.0px;color:#444">L</div>
<div class="t" style="left:890.50px;top:235px;font-size:14.0px;color:#444">M</div>
<div class="t" style="left:955.50px;top:235px;font-size:14.0px;color:#444">N</div>
<div class="t" style="left:1019.00px;top:235px;font-size:14.0px;color:#444">O</div>
<div class="t" style="left:10.00px;top:252px;font-size:13.5px;color:#444">1</div>
<div class="t" style="left:10.50px;top:269px;font-size:13.5px;color:#444">2</div>
<div class="t" style="left:10.50px;top:286px;font-size:13.5px;color:#444">3</div>
<div class="t" style="left:10.00px;top:303px;font-size:13.5px;color:#444">4</div>
<div class="t" style="left:10.50px;top:320px;font-size:13.5px;color:#444">5</div>
<div class="t" style="left:10.50px;top:337px;font-size:13.5px;color:#444">6</div>
<div class="t" style="left:10.50px;top:354px;font-size:13.5px;color:#444">7</div>
<div class="t" style="left:10.50px;top:371px;font-size:13.5px;color:#444">8</div>
<div class="t" style="left:10.50px;top:388px;font-size:13.5px;color:#217346">9</div>
<div class="t" style="left:6.25px;top:405px;font-size:13.5px;color:#444">10</div>
<div class="t" style="left:6.75px;top:422px;font-size:13.5px;color:#444">11</div>
<div class="t" style="left:6.25px;top:439px;font-size:13.5px;color:#444">12</div>
<div class="t" style="left:6.25px;top:456px;font-size:13.5px;color:#444">13</div>
<div class="t" style="left:5.75px;top:473px;font-size:13.5px;color:#444">14</div>
<div class="t" style="left:6.25px;top:490px;font-size:13.5px;color:#444">15</div>
<div class="t" style="left:6.25px;top:507px;font-size:13.5px;color:#444">16</div>
<div class="t" style="left:6.25px;top:524px;font-size:13.5px;color:#444">17</div>
<div class="t" style="left:6.25px;top:541px;font-size:13.5px;color:#444">18</div>
<div class="t" style="left:6.25px;top:558px;font-size:13.5px;color:#444">19</div>
<div class="t" style="left:6.75px;top:575px;font-size:13.5px;color:#444">20</div>
<div class="t" style="left:6.75px;top:592px;font-size:13.5px;color:#444">21</div>
<div class="a" style="left:1057px;top:233px;width:33px;height:16px;overflow:hidden"><div class="t" style="left:27px;top:1px;font-size:14px;color:#444">P</div></div>

<!-- window border -->
<div class="a" style="left:0;top:0;width:1113px;height:1px;background:#0b6431"></div>
<div class="a" style="left:0;top:0;width:1px;height:658px;background:#0b6431"></div>
<div class="a" style="left:1112px;top:0;width:1px;height:658px;background:#0b6431"></div>
</body></html>
